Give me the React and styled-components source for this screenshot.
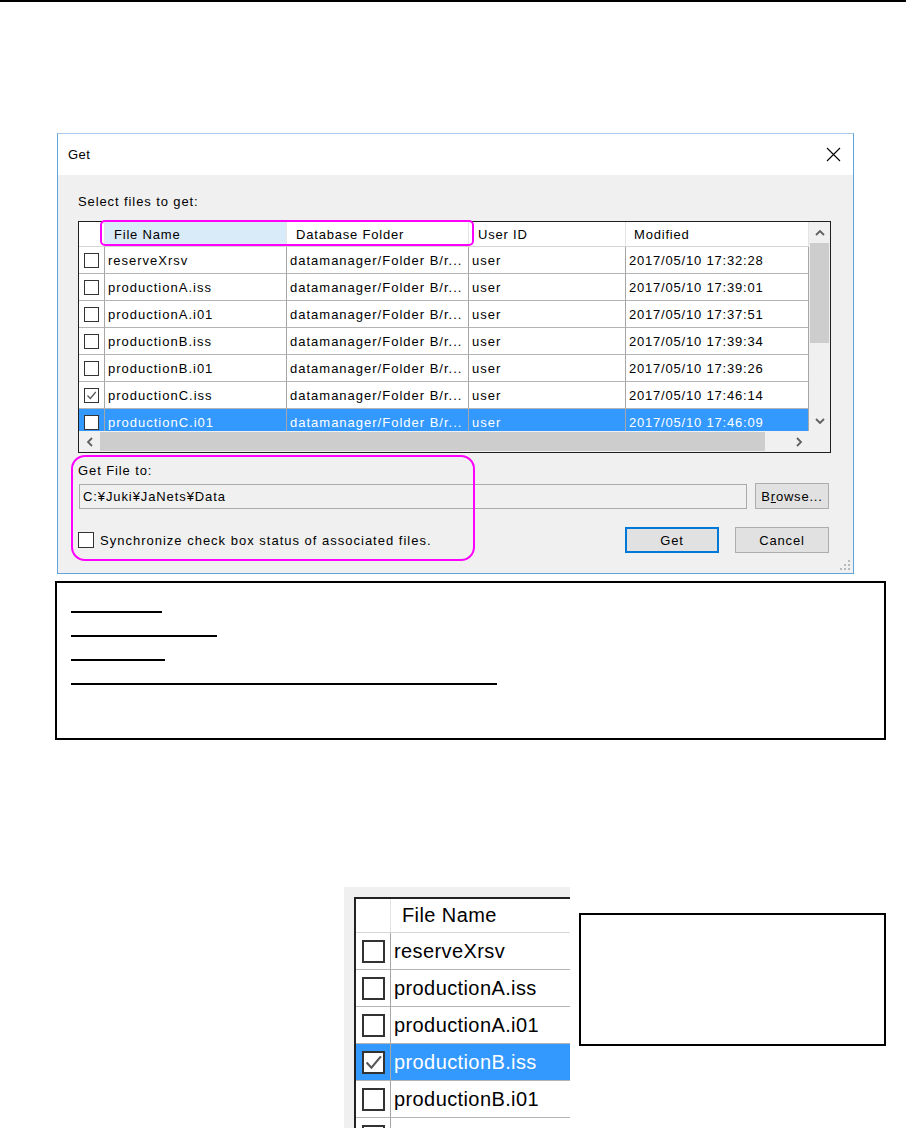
import React from "react";
import styled, { createGlobalStyle } from "styled-components";

const UI = `"Liberation Sans", Arial, sans-serif`;

const Global = createGlobalStyle`
  html, body { margin: 0; padding: 0; background: #fff; }
  body { width: 912px; height: 1128px; overflow: hidden; font-family: ${UI}; }
  * { box-sizing: border-box; }
`;

const Page = styled.div`
  width: 912px;
  height: 1128px;
  display: flex;
  flex-direction: column;
`;

const TopRule = styled.div`
  width: 906px;
  height: 2px;
  background: #000;
`;

/* ---------- Dialog ---------- */
const Dialog = styled.div`
  position: relative;
  margin: 131px 0 0 57px;
  width: 797px;
  height: 441px;
  border: 1px solid #5fa3dd;
  border-top-color: #a9cbe9;
  background: #f0f0f0;
  display: flex;
  flex-direction: column;
  font-family: ${UI};
  font-size: 13px;
  color: #000;
`;

const TitleBar = styled.div`
  height: 41px;
  background: #fff;
  display: flex;
  align-items: center;
  justify-content: space-between;
  padding: 0 12px 0 10px;
  font-size: 13px;
  letter-spacing: 0.5px;
`;

const Body = styled.div`
  flex: 1;
  display: flex;
  flex-direction: column;
  padding: 19px 22px 0 20px;
`;

const Label = styled.div`
  height: 16px;
  line-height: 16px;
  letter-spacing: 0.9px;
  margin-top: ${(p) => p.$mt || 0}px;
`;

const TableFrame = styled.div`
  margin-top: 11px;
  width: 753px;
  height: 232px;
  border: 1px solid #1f1f1f;
  display: grid;
  grid-template-columns: 730px 21px;
  grid-template-rows: 209px 21px;
`;

const ListArea = styled.div`
  background: #fff;
  overflow: hidden;
`;

const COLS = "26px 182px 182px 157px 183px";

const HeaderRow = styled.div`
  display: grid;
  grid-template-columns: ${COLS};
  height: 25px;
  border-bottom: 1px solid #d6d6d6;
`;

const HeaderCell = styled.div`
  display: flex;
  align-items: center;
  padding-left: ${(p) => p.$pl ?? 9}px;
  border-right: 1px solid #e5e5e5;
  background: ${(p) => (p.$hot ? "#d9ebf9" : "#fff")};
  letter-spacing: 0.8px;
  white-space: nowrap;
`;

const Row = styled.div`
  display: grid;
  grid-template-columns: ${COLS};
  height: 27px;
  background: ${(p) => (p.$sel ? "#3399ff" : "#fff")};
  color: ${(p) => (p.$sel ? "#fff" : "#000")};
`;

const Cell = styled.div`
  display: flex;
  align-items: center;
  padding-left: ${(p) => p.$pl ?? 3}px;
  border-right: 1px solid #a6a6a6;
  border-bottom: 1px solid #b4b4b4;
  white-space: nowrap;
  overflow: hidden;
  letter-spacing: ${(p) => (p.$mono ? "0.8px" : "1px")};
`;

const CheckBox = styled.span`
  display: inline-flex;
  align-items: center;
  justify-content: center;
  flex: none;
  width: ${(p) => p.$size}px;
  height: ${(p) => p.$size}px;
  border: ${(p) => (p.$size > 18 ? 2 : 1)}px solid #333;
  background: #fff;
`;

const VScroll = styled.div`
  background: #f0f0f0;
  display: flex;
  flex-direction: column;
`;

const HScroll = styled.div`
  background: #f0f0f0;
  display: flex;
  align-items: center;
`;

const Corner = styled.div`
  background: #f0f0f0;
`;

const ArrowBtn = styled.div`
  width: ${(p) => p.$w || 21}px;
  height: ${(p) => p.$h || 21}px;
  flex: none;
  display: flex;
  align-items: center;
  justify-content: center;
`;

const VThumb = styled.div`
  height: 100px;
  background: #cdcdcd;
  margin: 0 1px;
`;

const HThumb = styled.div`
  width: 665px;
  height: 19px;
  background: #cdcdcd;
`;

const Spacer = styled.div`
  flex: 1;
`;

const PathRow = styled.div`
  margin-top: 4px;
  display: grid;
  grid-template-columns: 668px 74px;
  column-gap: 8px;
  align-items: center;
  padding-left: 1px;
`;

const PathInput = styled.div`
  height: 25px;
  border: 1px solid #a9a9a9;
  background: #f0f0f0;
  display: flex;
  align-items: center;
  padding-left: 3px;
  letter-spacing: 0.9px;
`;

const Button = styled.div`
  height: 26px;
  width: ${(p) => p.$w || 94}px;
  display: flex;
  align-items: center;
  justify-content: center;
  background: #e1e1e1;
  border: ${(p) => (p.$default ? "2px solid #0078d7" : "1px solid #adadad")};
  letter-spacing: 0.8px;
`;

const ActionRow = styled.div`
  margin-top: 18px;
  display: flex;
  align-items: center;
  padding-right: 2px;
`;

const SyncLabel = styled.label`
  display: flex;
  align-items: center;
  gap: 6px;
  letter-spacing: 1px;
`;

const Buttons = styled.div`
  margin-left: auto;
  display: flex;
  gap: 16px;
`;

const Grip = styled.svg`
  position: absolute;
  right: 3px;
  bottom: 3px;
`;

const Callout = styled.div`
  position: absolute;
  left: ${(p) => p.$l}px;
  top: ${(p) => p.$t}px;
  width: ${(p) => p.$w}px;
  height: ${(p) => p.$h}px;
  border: 2px solid #ff00ff;
  border-radius: ${(p) => p.$r}px;
  pointer-events: none;
`;

/* ---------- Notes box ---------- */
const Notes = styled.div`
  margin: 7px 0 0 55px;
  width: 831px;
  height: 159px;
  border: 2px solid #000;
  padding: 6px 0 0 14px;
  display: flex;
  flex-direction: column;
`;

const NoteLine = styled.div`
  width: ${(p) => p.$w}px;
  height: 24px;
  border-bottom: 2px solid #000;
`;

/* ---------- Zoomed detail ---------- */
const Detail = styled.div`
  margin: 147px 0 0 344px;
  display: flex;
  align-items: flex-start;
`;

const Crop = styled.div`
  width: 226px;
  height: 241px;
  background: #f0f0f0;
  padding: 10px 0 0 10px;
  overflow: hidden;
`;

const BigTable = styled.div`
  border-left: 2px solid #222;
  border-top: 2px solid #222;
  background: #fff;
  font-family: ${UI};
  font-size: 20px;
  width: 240px;
`;

const BIG_COLS = "35px 1fr";

const BigHeader = styled.div`
  display: grid;
  grid-template-columns: ${BIG_COLS};
  height: 34px;
  border-bottom: 1px solid #d6d6d6;
`;

const BigHeadCell = styled.div`
  display: flex;
  align-items: center;
  padding-left: ${(p) => p.$pl ?? 0}px;
  border-right: 1px solid #e3e3e3;
  letter-spacing: 0.4px;
`;

const BigRow = styled.div`
  display: grid;
  grid-template-columns: ${BIG_COLS};
  height: 37px;
  background: ${(p) => (p.$sel ? "#3399ff" : "#fff")};
  color: ${(p) => (p.$sel ? "#fff" : "#000")};
`;

const BigCell = styled.div`
  display: flex;
  align-items: center;
  padding-left: ${(p) => p.$pl ?? 3}px;
  border-right: 1px solid #a6a6a6;
  border-bottom: 1px solid #b4b4b4;
  white-space: nowrap;
  letter-spacing: 0.4px;
`;

const SideBox = styled.div`
  margin: 26px 0 0 9px;
  width: 307px;
  height: 133px;
  border: 2px solid #000;
`;

/* ---------- Pieces ---------- */
const Check = ({ size = 15, checked }) => (
  <CheckBox $size={size}>
    {checked && (
      <svg width={size - 4} height={size - 4} viewBox="0 0 11 11">
        <polyline points="1.5,5.5 4.3,8.5 9.8,2" fill="none" stroke="#555" strokeWidth="1.2" />
      </svg>
    )}
  </CheckBox>
);

const Chevron = ({ dir }) => {
  const pts = {
    up: "1,6 5,2 9,6",
    down: "1,2 5,6 9,2",
    left: "6,1 2,5 6,9",
    right: "2,1 6,5 2,9",
  }[dir];
  const vertical = dir === "up" || dir === "down";
  return (
    <svg width={vertical ? 10 : 8} height={vertical ? 8 : 10} viewBox={vertical ? "0 0 10 8" : "0 0 8 10"}>
      <polyline points={pts} fill="none" stroke="#606060" strokeWidth="1.8" />
    </svg>
  );
};

const rows = [
  ["reserveXrsv", "2017/05/10 17:32:28", false],
  ["productionA.iss", "2017/05/10 17:39:01", false],
  ["productionA.i01", "2017/05/10 17:37:51", false],
  ["productionB.iss", "2017/05/10 17:39:34", false],
  ["productionB.i01", "2017/05/10 17:39:26", false],
  ["productionC.iss", "2017/05/10 17:46:14", true],
  ["productionC.i01", "2017/05/10 17:46:09", false],
];

const bigRows = [
  ["reserveXrsv", false, false],
  ["productionA.iss", false, false],
  ["productionA.i01", false, false],
  ["productionB.iss", true, true],
  ["productionB.i01", false, false],
  ["", true, false],
];

export default function App() {
  return (
    <Page>
      <Global />
      <TopRule />

      <Dialog>
        <TitleBar>
          <span>Get</span>
          <svg width="15" height="15" viewBox="0 0 15 15">
            <path d="M1 1 L14 14 M14 1 L1 14" stroke="#000" strokeWidth="1.1" />
          </svg>
        </TitleBar>

        <Body>
          <Label>Select files to get:</Label>

          <TableFrame>
            <ListArea>
              <HeaderRow>
                <HeaderCell $pl={0} />
                <HeaderCell $hot>File Name</HeaderCell>
                <HeaderCell>Database Folder</HeaderCell>
                <HeaderCell>User ID</HeaderCell>
                <HeaderCell $pl={8}>Modified</HeaderCell>
              </HeaderRow>
              {rows.map(([name, date, checked], i) => (
                <Row key={name} $sel={i === 6}>
                  <Cell $pl={5}>
                    <Check checked={checked} />
                  </Cell>
                  <Cell>{name}</Cell>
                  <Cell>datamanager/Folder B/r...</Cell>
                  <Cell>user</Cell>
                  <Cell $mono>{date}</Cell>
                </Row>
              ))}
            </ListArea>

            <VScroll>
              <ArrowBtn>
                <Chevron dir="up" />
              </ArrowBtn>
              <VThumb />
              <Spacer />
              <ArrowBtn>
                <Chevron dir="down" />
              </ArrowBtn>
            </VScroll>

            <HScroll>
              <ArrowBtn>
                <Chevron dir="left" />
              </ArrowBtn>
              <HThumb />
              <Spacer />
              <ArrowBtn $w={20}>
                <Chevron dir="right" />
              </ArrowBtn>
            </HScroll>
            <Corner />
          </TableFrame>

          <Label $mt={10}>Get File to:</Label>
          <PathRow>
            <PathInput>C:¥Juki¥JaNets¥Data</PathInput>
            <Button $w={74}>
              B<u>r</u>owse...
            </Button>
          </PathRow>

          <ActionRow>
            <SyncLabel>
              <Check size={16} />
              Synchronize check box status of associated files.
            </SyncLabel>
            <Buttons>
              <Button $default>Get</Button>
              <Button>Cancel</Button>
            </Buttons>
          </ActionRow>
        </Body>

        <Grip width="10" height="10" viewBox="0 0 10 10">
          {[
            [8, 0], [8, 4], [4, 4], [8, 8], [4, 8], [0, 8],
          ].map(([x, y]) => (
            <rect key={`${x}-${y}`} x={x} y={y} width="2" height="2" fill="#b9b9b9" />
          ))}
        </Grip>

        <Callout $l={42} $t={86} $w={374} $h={26} $r={5} />
        <Callout $l={13} $t={321} $w={404} $h={106} $r={14} />
      </Dialog>

      <Notes>
        <NoteLine $w={91} />
        <NoteLine $w={146} />
        <NoteLine $w={94} />
        <NoteLine $w={426} />
      </Notes>

      <Detail>
        <Crop>
          <BigTable>
            <BigHeader>
              <BigHeadCell />
              <BigHeadCell $pl={11}>File Name</BigHeadCell>
            </BigHeader>
            {bigRows.map(([name, checked, sel], i) => (
              <BigRow key={i} $sel={sel}>
                <BigCell $pl={6}>
                  <Check size={23} checked={checked} />
                </BigCell>
                <BigCell>{name}</BigCell>
              </BigRow>
            ))}
          </BigTable>
        </Crop>
        <SideBox />
      </Detail>
    </Page>
  );
}
